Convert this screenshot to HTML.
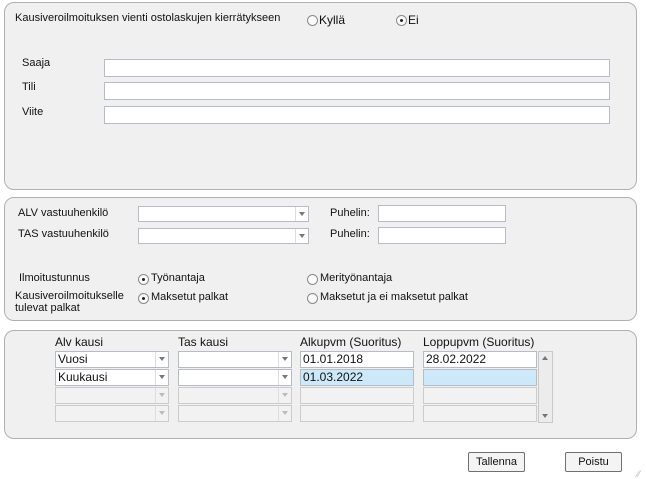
<!DOCTYPE html>
<html><head><meta charset="utf-8"><style>
body{margin:0;width:646px;height:479px;background:#fff;font-family:"Liberation Sans",sans-serif;font-size:11px;color:#111;position:relative;overflow:hidden}
.a{position:absolute}
.p{position:absolute;background:#f0f0f0;border:1px solid #b0b0b0;border-radius:10px}
.in{position:absolute;background:#fff;border:1px solid #b5bcc5;box-sizing:border-box;height:18px}
.cb{position:absolute;background:#fff;border:1px solid #b5bcc5;box-sizing:border-box;height:16px}
.cb::after{content:"";position:absolute;right:3px;top:5px;border:3px solid transparent;border-top:4px solid #777}
.cb.d{background:#f2f2f2;border-color:#ccc}.cb.d::after{border-top-color:#bbb}
.cb .b{position:absolute;right:12px;top:0;bottom:0;border-left:1px solid #ddd}
.r{position:absolute;width:11px;height:11px;border:1px solid #8a8a8a;border-radius:50%;background:#fafafa;box-sizing:border-box}
.r.on::after{content:"";position:absolute;left:3px;top:3px;width:3px;height:3px;background:#222;border-radius:50%}
.t{position:absolute;box-sizing:border-box;height:17px;border:1px solid #b5bcc5;background:#fff;font-size:12px;padding-left:2px;line-height:15px}
.t.s{background:#cde8f8}.t.d{background:#f2f2f2;border-color:#ccc}
.h{position:absolute;font-size:12px}
.btn{position:absolute;border:1px solid #707070;background:#f4f4f4;box-sizing:border-box;height:20px;text-align:center;line-height:18px;font-size:11px;border-radius:2px}
.l{font-size:12px}
</style></head><body>
<div class="p" style="left:4px;top:2px;width:631px;height:186px"></div>
<div class="a" style="left:15px;top:12px">Kausiveroilmoituksen vienti ostolaskujen kierrätykseen</div>
<div class="r" style="left:307px;top:15px"></div><div class="a l" style="left:319px;top:13px">Kyllä</div>
<div class="r on" style="left:396px;top:15px"></div><div class="a l" style="left:408px;top:13px">Ei</div>
<div class="a" style="left:22px;top:57px">Saaja</div><div class="in" style="left:104px;top:59px;width:506px"></div>
<div class="a" style="left:22px;top:81px">Tili</div><div class="in" style="left:104px;top:82px;width:506px"></div>
<div class="a" style="left:22px;top:106px">Viite</div><div class="in" style="left:104px;top:106px;width:506px"></div>

<div class="p" style="left:4px;top:197px;width:631px;height:122px"></div>
<div class="a" style="left:18px;top:207px">ALV vastuuhenkilö</div><div class="cb" style="left:138px;top:206px;width:171px"><div class="b"></div></div>
<div class="a" style="left:330px;top:207px">Puhelin:</div><div class="in" style="left:378px;top:205px;width:128px;height:17px"></div>
<div class="a" style="left:18px;top:228px">TAS vastuuhenkilö</div><div class="cb" style="left:138px;top:228px;width:171px"><div class="b"></div></div>
<div class="a" style="left:330px;top:228px">Puhelin:</div><div class="in" style="left:378px;top:227px;width:128px;height:17px"></div>
<div class="a" style="left:19px;top:272px">Ilmoitustunnus</div>
<div class="r on" style="left:138px;top:274px"></div><div class="a" style="left:151px;top:272px">Työnantaja</div>
<div class="r" style="left:307px;top:274px"></div><div class="a" style="left:320px;top:272px">Merityönantaja</div>
<div class="a" style="left:15px;top:290px;line-height:12px">Kausiveroilmoitukselle<br>tulevat palkat</div>
<div class="r on" style="left:138px;top:293px"></div><div class="a" style="left:151px;top:291px">Maksetut palkat</div>
<div class="r" style="left:307px;top:293px"></div><div class="a" style="left:320px;top:291px">Maksetut ja ei maksetut palkat</div>

<div class="p" style="left:4px;top:330px;width:631px;height:107px"></div>
<div class="h" style="left:55px;top:335px">Alv kausi</div>
<div class="h" style="left:178px;top:335px">Tas kausi</div>
<div class="h" style="left:300px;top:335px">Alkupvm (Suoritus)</div>
<div class="h" style="left:423px;top:335px">Loppupvm (Suoritus)</div>
<div class="cb" style="left:55px;top:351px;width:114px;height:17px"><div class="b"></div><span style="font-size:12px;padding-left:2px;position:absolute;top:0">Vuosi</span></div>
<div class="cb" style="left:178px;top:351px;width:114px;height:17px"><div class="b"></div></div>
<div class="t" style="left:300px;top:351px;width:114px">01.01.2018</div>
<div class="t" style="left:423px;top:351px;width:114px">28.02.2022</div>
<div class="cb" style="left:55px;top:369px;width:114px;height:17px"><div class="b"></div><span style="font-size:12px;padding-left:2px;position:absolute;top:0">Kuukausi</span></div>
<div class="cb" style="left:178px;top:369px;width:114px;height:17px"><div class="b"></div></div>
<div class="t s" style="left:300px;top:369px;width:114px">01.03.2022</div>
<div class="t s" style="left:423px;top:369px;width:114px"></div>
<div class="cb d" style="left:55px;top:387px;width:114px;height:17px"><div class="b"></div></div>
<div class="cb d" style="left:178px;top:387px;width:114px;height:17px"><div class="b"></div></div>
<div class="t d" style="left:300px;top:387px;width:114px"></div>
<div class="t d" style="left:423px;top:387px;width:114px"></div>
<div class="cb d" style="left:55px;top:405px;width:114px;height:17px"><div class="b"></div></div>
<div class="cb d" style="left:178px;top:405px;width:114px;height:17px"><div class="b"></div></div>
<div class="t d" style="left:300px;top:405px;width:114px"></div>
<div class="t d" style="left:423px;top:405px;width:114px"></div>
<div class="a" style="left:538px;top:351px;width:15px;height:72px;background:#ececec;border:1px solid #c8c8c8;box-sizing:border-box">
<div class="a" style="left:3px;top:1px;border:3px solid transparent;border-bottom:4px solid #777"></div>
<div class="a" style="left:3px;bottom:1px;border:3px solid transparent;border-top:4px solid #777"></div></div>

<div class="btn" style="left:468px;top:452px;width:57px">Tallenna</div>
<div class="btn" style="left:565px;top:452px;width:57px">Poistu</div>
<div class="a" style="left:637px;top:469px;color:#bbb;font-size:9px">⁄⁄</div>
</body></html>
